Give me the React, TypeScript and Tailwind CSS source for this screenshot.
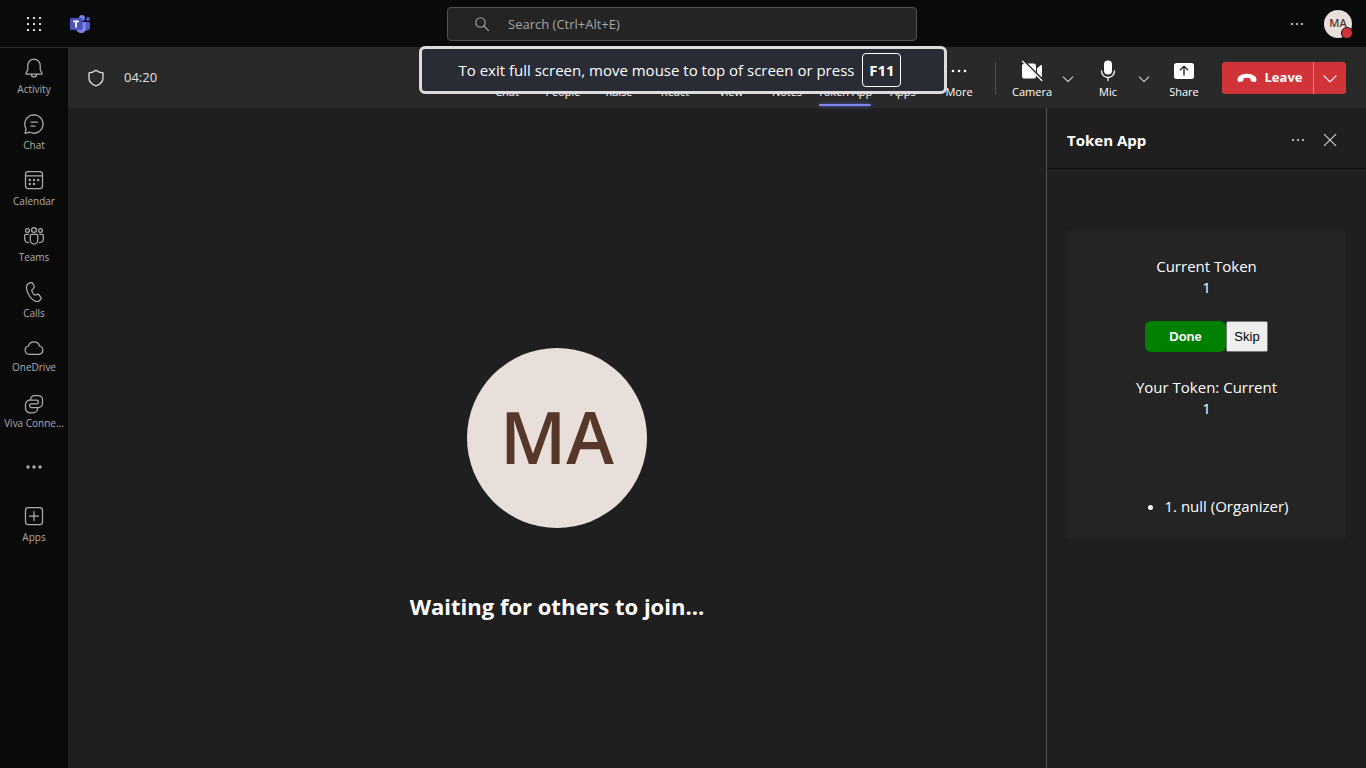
import type { ReactNode } from 'react';

type IconProps = { children: ReactNode; className?: string; width?: number };

function Icon({ children, className = 'size-5', width = 1.25 }: IconProps) {
  return (
    <svg
      viewBox="0 0 20 20"
      className={className}
      fill="none"
      stroke="currentColor"
      strokeWidth={width}
      strokeLinecap="round"
      strokeLinejoin="round"
      aria-hidden="true"
    >
      {children}
    </svg>
  );
}

function Dots({ className = 'size-5', r = 1.1, gap = 5 }: { className?: string; r?: number; gap?: number }) {
  return (
    <svg viewBox="0 0 20 20" className={className} fill="currentColor" aria-hidden="true">
      <circle cx={10 - gap} cy="10" r={r} />
      <circle cx="10" cy="10" r={r} />
      <circle cx={10 + gap} cy="10" r={r} />
    </svg>
  );
}

function Waffle() {
  return (
    <svg viewBox="0 0 20 20" className="size-5" fill="#fff" aria-hidden="true">
      {[3, 9, 15].map((y) => [3, 9, 15].map((x) => <rect key={`${x}-${y}`} x={x} y={y} width="2" height="2" rx="0.4" />))}
    </svg>
  );
}

function TeamsLogo() {
  return (
    <svg viewBox="0 0 20 18" className="h-[18px] w-5" aria-label="Microsoft Teams" role="img">
      <circle cx="18" cy="4" r="2" fill="#5059c9" />
      <path d="M14.5 7h4.6c.5 0 .9.4.9.9v4.3a3.2 3.2 0 0 1-3.2 3.2h-2.3z" fill="#5059c9" />
      <circle cx="12" cy="2.9" r="2.9" fill="#7b83eb" />
      <path d="M7 7h8.1c.5 0 .9.4.9.9v5.2a5 5 0 0 1-5 5 4.900 4.900 0 0 1-4.600-3.300z" fill="#7b83eb" />
      <path d="M9 3h3.900v9.900c0 .8-.7 1.500-1.500 1.500H7z" fill="#3f479f" opacity=".45" />
      <rect y="3" width="12" height="12" rx="1" fill="#4b53bc" />
      <path d="M3.200 5.500h5.600v1.700H6.900v5.400H5.100V7.200H3.200z" fill="#fff" />
    </svg>
  );
}

const bell = (
  <Icon>
    <path d="M10 1.200a6.200 6.200 0 0 0-6.200 6.200v4.400L2 15.300a.6.600 0 0 0 .500.900h15a.6.600 0 0 0 .500-.900l-1.800-3.500V7.400A6.200 6.200 0 0 0 10 1.200z" />
    <path d="M7.400 16.300a2.600 2.600 0 0 0 5.200 0" />
  </Icon>
);
const chat = (
  <Icon>
    <path d="M10 .8A9.200 9.200 0 1 1 5.700 18.200L1.100 19.300l1-4.600A9.200 9.200 0 0 1 10 .8z" />
    <path d="M7 8.200h6.500M7 12h4" />
  </Icon>
);
const calendar = (
  <Icon>
    <rect x="1.500" y="1.500" width="17" height="17" rx="2.800" />
    <path d="M1.500 5.800h17" />
    <g fill="currentColor" stroke="none">
      <circle cx="5.800" cy="10" r="1.200" />
      <circle cx="10" cy="10" r="1.200" />
      <circle cx="14.200" cy="10" r="1.200" />
      <circle cx="5.800" cy="14" r="1.200" />
      <circle cx="10" cy="14" r="1.200" />
    </g>
  </Icon>
);
const teams = (
  <Icon>
    <circle cx="10" cy="3.900" r="2.400" />
    <circle cx="3.500" cy="4.400" r="1.900" />
    <circle cx="16.500" cy="4.400" r="1.900" />
    <path d="M6.300 9.300c0-.6.500-1 1-1h5.400c.6 0 1 .4 1 1v5a3.700 3.700 0 0 1-7.400 0z" />
    <path d="M4.300 8.300H1.700c-.6 0-1 .4-1 1v3.900c0 2 1.500 3.400 3.800 3.300M15.700 8.300h2.600c.6 0 1 .4 1 1v3.900c0 2-1.500 3.400-3.800 3.300" />
  </Icon>
);
const calls = (
  <Icon>
    <path d="M5.300 1.100l1.300-.4c1-.3 2 .2 2.400 1.100l1 2.300c.3.800.1 1.700-.5 2.300L7.700 8.100c.2 1.700 1.500 3.900 3 5l2.300-.7c.8-.3 1.700 0 2.200.7l1.400 2c.6.800.5 2-.3 2.700l-.9.900c-1 .9-2.300 1.200-3.500.7C6.500 17.600 1.800 9.200 2.600 4.300c.3-1.500 1.300-2.700 2.700-3.200z" />
  </Icon>
);
const cloud = (
  <Icon>
    <path d="M5.300 16.300h9.600a4.200 4.200 0 0 0 .6-8.300 5.700 5.700 0 0 0-11 0 4.200 4.200 0 0 0 .8 8.300z" />
  </Icon>
);
const viva = (
  <Icon>
    <path d="M6.500 5.800a4.300 4.300 0 0 1 4.300-4.300h3.400a4.300 4.300 0 0 1 4.300 4.300v3.400a4.300 4.300 0 0 1-4.300 4.300H7a1.900 1.900 0 0 1 0-3.700h6a1.900 1.900 0 0 0 0-3.700H5.800a4.300 4.300 0 0 0-4.300 4.300v4.100a4.300 4.300 0 0 0 4.300 4.300h3.400a4.300 4.300 0 0 0 4.300-4.300" />
  </Icon>
);
const appsIcon = (
  <Icon>
    <rect x="1.500" y="1.500" width="17" height="17" rx="2.800" />
    <path d="M10 5.500v9M5.500 10h9" />
  </Icon>
);

const navItems: { label: string; icon: ReactNode }[] = [
  { label: 'Activity', icon: bell },
  { label: 'Chat', icon: chat },
  { label: 'Calendar', icon: calendar },
  { label: 'Teams', icon: teams },
  { label: 'Calls', icon: calls },
];
const pinnedItems: { label: string; icon: ReactNode }[] = [
  { label: 'OneDrive', icon: cloud },
  { label: 'Viva Conne...', icon: viva },
];

function NavButton({ label, icon, tight = false }: { label: string; icon: ReactNode; tight?: boolean }) {
  return (
    <button className={`flex h-14 w-full flex-col items-center pt-2.5 ${tight ? 'gap-0.5' : 'gap-1'}`}>
      {icon}
      <span className="text-[10px] leading-[14px] whitespace-nowrap">{label}</span>
    </button>
  );
}

function ToolButton({ label, children, active = false, className = 'w-14' }: { label: string; children: ReactNode; active?: boolean; className?: string }) {
  return (
    <button className={`relative flex h-full shrink-0 flex-col items-center gap-px pt-[11px] text-white ${className}`}>
      <span className="flex h-6 items-center">{children}</span>
      <span className="text-[11px] leading-4 whitespace-nowrap">{label}</span>
      {active && (
        <span className="absolute bottom-0.5 left-1/2 h-0.5 w-[52px] -translate-x-1/2 rounded-full bg-[#7f85f5] shadow-[0_0_4px_#5b5fc7]" />
      )}
    </button>
  );
}

function ChevronButton({ label }: { label: string }) {
  return (
    <button aria-label={label} className="flex h-full w-4 items-center justify-center pt-0.5 text-[#d6d6d6]">
      <Icon className="size-3" width={1.7}>
        <path d="M2 6.500l8 8 8-8" />
      </Icon>
    </button>
  );
}

function TopBar() {
  return (
    <header className="flex h-12 shrink-0 items-center border-b border-[#292929] bg-[#0a0a0a]">
      <div className="flex flex-1 items-center gap-[26px] pl-6">
        <button aria-label="App launcher"><Waffle /></button>
        <TeamsLogo />
      </div>
      <div className="flex h-[34px] w-[470px] items-center gap-4 rounded border border-[#525252] bg-[#242424] pl-6 text-[#a6a6a6]">
        <Icon className="size-5" width={1.1}>
          <circle cx="8.500" cy="8.500" r="4.700" />
          <path d="M12 12l4.500 4.500" />
        </Icon>
        <input
          type="text"
          aria-label="Search"
          placeholder="Search (Ctrl+Alt+E)"
          className="h-full min-w-0 flex-1 bg-transparent text-[13px] outline-none placeholder:text-[#a6a6a6]"
        />
      </div>
      <div className="flex flex-1 items-center justify-end gap-[17px] pr-3.5 pl-3">
        <button aria-label="Settings and more" className="text-[#d6d6d6]"><Dots /></button>
        <button className="relative flex size-7 items-center justify-center rounded-full bg-[#e8deda] text-[11px] font-semibold text-[#57372a]">
          MA
          <span className="absolute -right-px -bottom-px size-3 rounded-full border border-[#0a0a0a] bg-[#d13438]" />
        </button>
      </div>
    </header>
  );
}

function MeetingBar() {
  return (
    <div className="flex h-[60px] shrink-0 items-center justify-between bg-[#292929] pr-5 pl-[18px]">
      <div className="flex items-center gap-[18px] text-[13px] text-[#e0e0e0]">
        <Icon className="size-5" width={1.3}>
          <path d="M10 2.300c2 1.600 4.300 2.400 7 2.500v5c0 3.800-2.600 6.600-7 8.100-4.400-1.500-7-4.300-7-8.100v-5c2.700-.1 5-.9 7-2.500z" />
        </Icon>
        <time>04:20</time>
      </div>
      <div className="flex h-full items-center">
        <ToolButton label="Chat">{chat}</ToolButton>
        <ToolButton label="People">{teams}</ToolButton>
        <ToolButton label="Raise">{bell}</ToolButton>
        <ToolButton label="React">{cloud}</ToolButton>
        <ToolButton label="View">{calendar}</ToolButton>
        <ToolButton label="Notes">{calendar}</ToolButton>
        <ToolButton label="Token App" active className="w-[60px]">{appsIcon}</ToolButton>
        <ToolButton label="Apps">{appsIcon}</ToolButton>
        <ToolButton label="More"><Dots r={1.3} gap={6} /></ToolButton>
        <span className="mx-2 h-8 w-px bg-[#525252]" />
        <ToolButton label="Camera">
          <svg viewBox="0 0 22 22" className="size-[22px]" aria-hidden="true">
            <rect x="1" y="3.500" width="14" height="15" rx="2.600" fill="#fff" />
            <path d="M16 8.200l4-3.100c.5-.4 1-.1 1 .5v10.800c0 .6-.5.900-1 .5l-4-3.100z" fill="#fff" />
            <path d="M2.500 0.500L22 20" stroke="#292929" strokeWidth="1.800" />
            <path d="M1.500 1.200L20.800 20.500" stroke="#fff" strokeWidth="1.300" strokeLinecap="round" />
          </svg>
        </ToolButton>
        <ChevronButton label="Camera options" />
        <span className="w-1" />
        <ToolButton label="Mic">
          <svg viewBox="0 0 22 22" className="size-[22px]" aria-hidden="true">
            <rect x="7" y="0.500" width="8" height="14" rx="4" fill="#fff" />
            <path d="M4.500 11a6.500 6.500 0 0 0 13 0M11 17.500v3" fill="none" stroke="#fff" strokeWidth="1.300" strokeLinecap="round" />
          </svg>
        </ToolButton>
        <ChevronButton label="Microphone options" />
        <span className="w-1" />
        <ToolButton label="Share">
          <svg viewBox="0 0 22 22" className="size-[22px]" aria-hidden="true">
            <rect x="1" y="3" width="20" height="16" rx="2.500" fill="#fff" />
            <path d="M11 15V6.500M7.300 9.800L11 6.200l3.700 3.600" fill="none" stroke="#292929" strokeWidth="1.400" strokeLinecap="round" strokeLinejoin="round" />
          </svg>
        </ToolButton>
        <div className="ml-2.5 flex h-8 gap-px overflow-hidden rounded bg-[#e58587] text-white">
          <button className="flex w-[91px] items-center justify-center gap-2 bg-[#d13438] pl-1 text-[13px] font-bold">
            <svg viewBox="0 0 20 10" className="h-2.5 w-5" fill="#fff" aria-hidden="true">
              <path d="M10 .7c3.400 0 6.500 1 8.300 2.900 1.100 1.100 1.400 2.600 1 4.100-.2.900-1 1.400-1.900 1.200l-2.300-.4c-.8-.2-1.400-.8-1.500-1.600l-.3-1.700c-2.100-.7-4.500-.7-6.600 0l-.3 1.700c-.1.800-.7 1.400-1.500 1.600l-2.300.4C1.700 9.100.9 8.600.7 7.700c-.4-1.500-.1-3 1-4.100C3.500 1.700 6.600.7 10 .7z" />
            </svg>
            Leave
          </button>
          <button aria-label="Leave options" className="flex w-8 items-center justify-center bg-[#d13438] pt-0.5">
            <Icon className="size-4" width={1.5}>
              <path d="M2.500 6l7.500 7.500L17.500 6" />
            </Icon>
          </button>
        </div>
      </div>
    </div>
  );
}

function TokenPanel() {
  return (
    <aside className="flex w-80 shrink-0 flex-col border-l border-[#525252]">
      <div className="flex h-[61px] items-center justify-between border-b border-[#0f0f0f] pt-1 pr-[26px] pl-5">
        <h2 className="text-[15px] font-bold text-white">Token App</h2>
        <div className="flex items-center gap-3 text-[#d6d6d6]">
          <button aria-label="More options"><Dots /></button>
          <button aria-label="Close">
            <Icon width={1.1}><path d="M4.300 4.300l11.400 11.400M15.700 4.300L4.300 15.700" /></Icon>
          </button>
        </div>
      </div>
      <section className="mx-5 mt-[62px] flex flex-col items-center bg-[#242424] pt-[25px] pb-[21px] text-[15px] leading-[21px] text-white">
        <p>Current Token</p>
        <p>1</p>
        <div className="mt-[23px] flex h-[31px] font-['Liberation_Sans',Arial,sans-serif] text-[13px]">
          <button className="w-[81px] rounded-md bg-[#008000] font-bold">Done</button>
          <button className="w-[42px] rounded-xs border border-[#767676] bg-[#efefef] text-black">Skip</button>
        </div>
        <p className="mt-[25px]">Your Token: Current</p>
        <p>1</p>
        <ul className="mt-[77px] list-disc pl-10">
          <li>1. null (Organizer)</li>
        </ul>
      </section>
    </aside>
  );
}

export default function App() {
  return (
    <div className="relative flex h-screen flex-col overflow-hidden bg-[#1f1f1f] font-['Open_Sans','Noto_Sans',sans-serif]">
      <TopBar />
      <div className="flex min-h-0 flex-1">
        <nav className="w-[68px] shrink-0 bg-[#0a0a0a] text-[#adadad]">
          {navItems.map((item) => <NavButton key={item.label} {...item} />)}
          {pinnedItems.map((item) => <NavButton key={item.label} {...item} tight />)}
          <button aria-label="More apps" className="flex h-14 w-full items-center justify-center pb-0.5">
            <Dots r={1.7} gap={6} />
          </button>
          <NavButton label="Apps" icon={appsIcon} />
        </nav>
        <div className="flex min-w-0 flex-1 flex-col">
          <MeetingBar />
          <div className="flex min-h-0 flex-1">
            <main className="flex min-w-0 flex-1 flex-col items-center justify-center gap-[60px] pt-24">
              <div className="flex size-[180px] items-center justify-center rounded-full bg-[#e8deda] pb-1 text-[72px] font-semibold text-[#57372a]">
                MA
              </div>
              <h1 className="text-[22px] leading-9 font-bold text-white">Waiting for others to join...</h1>
            </main>
            <TokenPanel />
          </div>
        </div>
      </div>
      <div
        role="status"
        className="absolute top-[46px] left-1/2 flex h-12 w-[528px] -translate-x-1/2 items-center justify-center gap-2 rounded-md border-3 border-[#dcdcdc] bg-[#292c34] pr-1.5 text-[15px] text-white"
      >
        <span className="whitespace-nowrap">To exit full screen, move mouse to top of screen or press</span>
        <kbd className="flex h-[34px] w-[39px] items-center justify-center rounded border border-white font-['Open_Sans','Noto_Sans',sans-serif] font-bold">
          F11
        </kbd>
      </div>
    </div>
  );
}
